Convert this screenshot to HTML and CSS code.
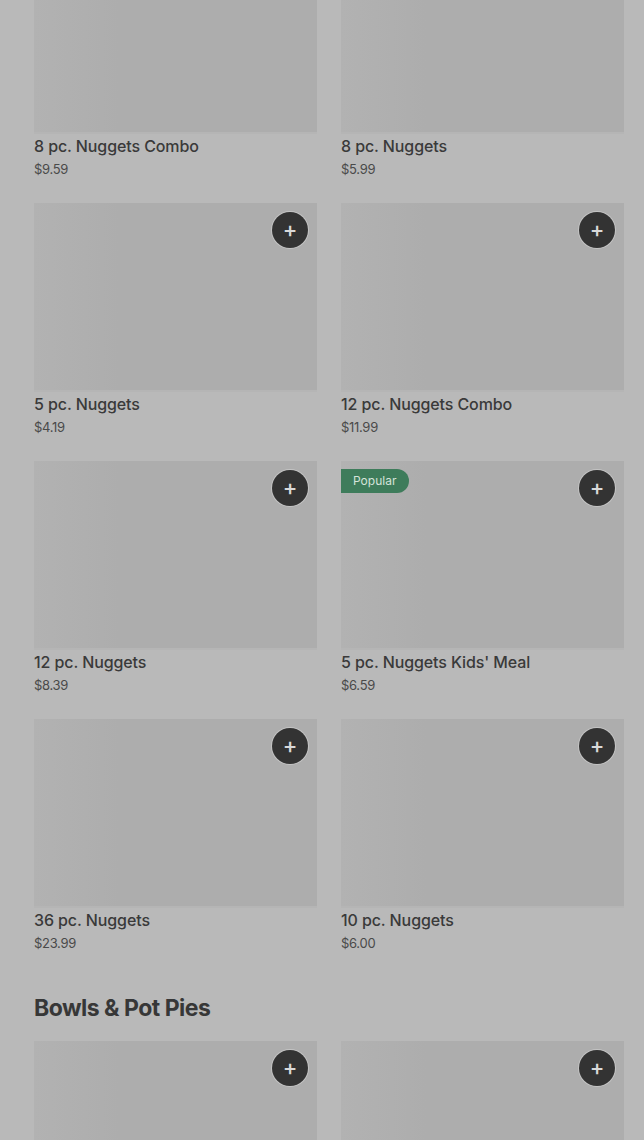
FILE: index.html
```html
<!DOCTYPE html>
<html lang="en">
<head>
    <meta charset="UTF-8">
    <meta name="viewport" content="width=device-width, initial-scale=1.0">
    <title>Menu</title>
    <link rel="stylesheet" href="styles.css">
</head>
<body>
    <div class="menu">
        <div class="grid first">
            <div class="card">
                <div class="thumb"></div>
                <div class="name">8 pc. Nuggets Combo</div>
                <div class="price">$9.59</div>
            </div>
            <div class="card">
                <div class="thumb"></div>
                <div class="name">8 pc. Nuggets</div>
                <div class="price">$5.99</div>
            </div>
            <div class="card">
                <div class="thumb"><span class="add">+</span></div>
                <div class="name">5 pc. Nuggets</div>
                <div class="price">$4.19</div>
            </div>
            <div class="card">
                <div class="thumb"><span class="add">+</span></div>
                <div class="name">12 pc. Nuggets Combo</div>
                <div class="price">$11.99</div>
            </div>
            <div class="card">
                <div class="thumb"><span class="add">+</span></div>
                <div class="name">12 pc. Nuggets</div>
                <div class="price">$8.39</div>
            </div>
            <div class="card">
                <div class="thumb">
                    <span class="badge">Popular</span>
                    <span class="add">+</span>
                </div>
                <div class="name">5 pc. Nuggets Kids' Meal</div>
                <div class="price">$6.59</div>
            </div>
            <div class="card">
                <div class="thumb"><span class="add">+</span></div>
                <div class="name">36 pc. Nuggets</div>
                <div class="price">$23.99</div>
            </div>
            <div class="card">
                <div class="thumb"><span class="add">+</span></div>
                <div class="name">10 pc. Nuggets</div>
                <div class="price">$6.00</div>
            </div>
        </div>

        <h2 class="section-title">Bowls &amp; Pot Pies</h2>

        <div class="grid">
            <div class="card">
                <div class="thumb"><span class="add">+</span></div>
            </div>
            <div class="card">
                <div class="thumb"><span class="add">+</span></div>
            </div>
        </div>
    </div>
</body>
</html>
```

FILE: styles.css
```css
body {
    margin: 0;
    background-color: #b9b9b9;
    font-family: Inter, Roboto, "Liberation Sans", sans-serif;
    color: #3a3a3a;
    overflow: hidden;
}
.menu {
    padding: 0 20px 0 34px;
}
.grid {
    display: grid;
    grid-template-columns: 283px 283px;
    column-gap: 24px;
    row-gap: 25px;
}
.grid.first {
    margin-top: -55px;
}
.card {
    display: flex;
    flex-direction: column;
}
.thumb {
    position: relative;
    height: 187px;
    background: linear-gradient(90deg, #b2b2b2 0%, #adadad 30%, #adadad 100%);
    border-bottom: 2px solid #b5b5b5;
}
.add {
    position: absolute;
    top: 9px;
    right: 9px;
    width: 36px;
    height: 36px;
    border-radius: 50%;
    background-color: #333333;
    box-shadow: 0 0 0 1px #c4c4c4;
    color: #d9d9d9;
    font-size: 22px;
    font-weight: 500;
    line-height: 35px;
    text-align: center;
}
.badge {
    position: absolute;
    top: 8px;
    left: 0;
    height: 24px;
    padding: 0 13px 0 12px;
    border-radius: 0 12px 12px 0;
    background-color: #3e7c5b;
    color: #d5e3da;
    font-size: 12px;
    line-height: 24px;
}
.name {
    margin-top: 2px;
    font-size: 16px;
    font-weight: 500;
    line-height: 20px;
    letter-spacing: -0.1px;
}
.price {
    margin-top: 4px;
    font-size: 13px;
    line-height: 18px;
    color: #4a4a4a;
    letter-spacing: -0.3px;
}
.section-title {
    margin: 42px 0 19px;
    font-size: 23px;
    font-weight: 700;
    line-height: 28px;
    letter-spacing: -0.5px;
    color: #373737;
}
```
